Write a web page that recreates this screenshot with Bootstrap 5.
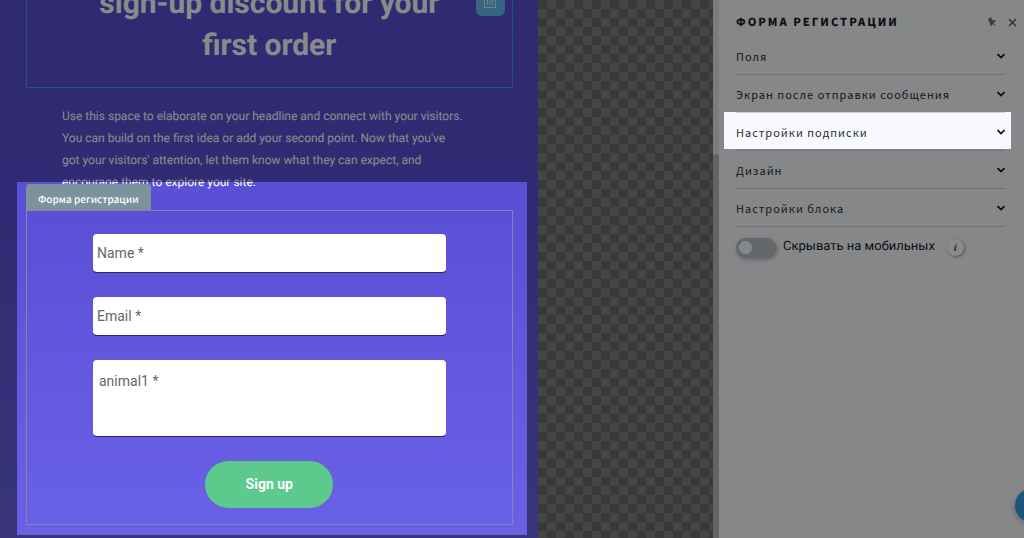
<!DOCTYPE html>
<html lang="ru">
<head>
<meta charset="utf-8">
<meta name="viewport" content="width=device-width, initial-scale=1">
<title>Форма регистрации</title>
<link href="https://cdn.jsdelivr.net/npm/bootstrap@5.3.0/dist/css/bootstrap.min.css" rel="stylesheet">
<style>
  :root { --shade: rgba(0, 0, 0, .46); --ui: "Noto Sans CJK SC", "Noto Sans", sans-serif; }
  body { font-family: Roboto, sans-serif; text-rendering: geometricPrecision; }
  .spotlight { box-shadow: 0 0 0 2000px var(--shade); }
  .page-pane { flex: 0 0 52.5%; padding: 0 11px 0 17px; background: linear-gradient(#5a4fd4 0, #5a50d6 40%, #6a62e6 100%); }
  .headline-block { margin: -40px 14px 0 9px; padding: 22px 60px 20px; border: 1px solid #43a0dc; }
  .headline-block h1 { font: 700 30px/42px Roboto, sans-serif; color: #fff; }
  .trash-btn { right: 7px; bottom: 71px; width: 29px; height: 29px; border-radius: 6px; background: #60bdea; }
  .intro { margin: 17px 30px 0 45px; font-size: 12px; line-height: 22px; color: #fff; }
  .form-spot { margin-top: -11px; padding: 2px 14px 10px 9px; }
  .block-tag { height: 26px; padding: 0 12px; font: 500 10px/29px var(--ui); color: #fff; background: #7c939d; border-radius: 3px 3px 0 0; }
  .form-frame { padding: 23px 66px 16px; gap: 24px; border: 1px solid #8683b4; }
  .field { padding: 0 4px; height: 39px; font-size: 14px; color: #666; border: 0; border-bottom: 1px solid #2b2660; border-radius: 4px; }
  .field::placeholder { color: #666; opacity: 1; }
  textarea.field { height: 77px; padding: 11px 6px; resize: none; }
  .submit-btn { width: 128px; height: 47px; font-size: 14px; font-weight: 700; color: #fff; background: #5dc98c; }
  .canvas-pane { background: repeating-conic-gradient(#454545 0 25%, #393939 0 50%) 0 0 / 18px 18px; }
  .scroll-track { width: 6px; padding-top: 154px; background: #7b7d7d; }
  .scroll-thumb { background: #626565; border-radius: 3px 3px 0 0; }
  .settings { flex: 0 0 305px; padding: 10px 19px 0 17px; background: #f7f9fe; color: #1c1e22; }
  .settings-head { height: 24px; margin-right: -12px; margin-bottom: 3px; }
  .settings-head h2 { font: 900 11px/24px var(--ui); letter-spacing: 2px; }
  .section-row { height: 38px; font: 400 11px/38px var(--ui); letter-spacing: 1px; color: #2a2d33; border-bottom: 1px solid #d0d4d8; }
  .section-row.current::after { content: ""; position: absolute; inset: -1px -6px 1px -12px; box-shadow: 0 0 0 2000px var(--shade); }
  .mobile-row { margin-top: 8px; height: 24px; font-size: 13px; }
  .mobile-row .form-check-input { width: 40px; height: 19px; border: 0; box-shadow: 1px 2px 4px #a5a9ad; background-color: #bac1c5; background-image: radial-gradient(circle 7px, #f7f9fc 6px, transparent 7px); background-size: 19px 19px; background-position: left center; }
  .mobile-row label { margin-left: 7px; }
  .info-btn { width: 17px; height: 17px; margin-left: 12px; font: italic 700 11px/17px "Liberation Serif", serif; color: #555; background: #fff; box-shadow: 1px 1px 3px #999; }
  .help-btn { right: -24px; bottom: 16px; width: 33px; height: 33px; background: #369be0; box-shadow: 0 2px 6px #bbb; }
</style>
</head>
<body class="vh-100 overflow-hidden">
<div class="d-flex h-100">
  <main class="page-pane position-relative overflow-hidden">
    <div class="headline-block position-relative">
      <h1 class="m-0 text-center">sign-up discount for your<br>first order</h1>
      <button class="trash-btn btn p-0 position-absolute d-flex justify-content-center align-items-center" type="button" aria-label="Удалить">
        <svg width="14" height="16" viewBox="0 0 14 16" fill="none" stroke="#d8effa" aria-hidden="true"><path d="M0 0.500h14M1.500 1v12.500h11V1M4.500 5v6M7 5v6M9.500 5v6"/></svg>
      </button>
    </div>
    <p class="intro">Use this space to elaborate on your headline and connect with your visitors.<br>You can build on the first idea or add your second point. Now that you've<br>got your visitors' attention, let them know what they can expect, and<br>encourage them to explore your site.</p>
    <section class="form-spot spotlight position-relative">
      <div class="block-tag d-inline-block align-top">Форма регистрации</div>
      <form class="form-frame d-flex flex-column">
        <input class="field form-control" type="text" placeholder="Name *" aria-label="Name *">
        <input class="field form-control" type="email" placeholder="Email *" aria-label="Email *">
        <textarea class="field form-control" placeholder="animal1 *" aria-label="animal1 *"></textarea>
        <button class="submit-btn btn rounded-pill align-self-center" type="button">Sign up</button>
      </form>
    </section>
  </main>
  <div class="canvas-pane flex-grow-1 d-flex justify-content-end">
    <div class="scroll-track d-flex"><div class="scroll-thumb flex-grow-1"></div></div>
  </div>
  <aside class="settings position-relative overflow-hidden">
    <div class="settings-head d-flex align-items-center">
      <h2 class="m-0 me-auto">ФОРМА РЕГИСТРАЦИИ</h2>
      <button class="btn p-0 border-0 d-flex me-2 pe-1" type="button" aria-label="Закрепить">
        <svg width="9" height="10" viewBox="0 0 9 10" fill="#6f767b" aria-hidden="true"><path d="M1 2.500 3.500 0l1 1v1l2 1.500L8.500 3 9 4 6.500 6.300 9 9.500 5.600 7.200 4 9 3 8.500l.2-2L1.800 4.500z"/></svg>
      </button>
      <button class="btn p-0 border-0 d-flex" type="button" aria-label="Закрыть">
        <svg width="9" height="9" viewBox="0 0 9 9" fill="none" stroke="#5c6167" stroke-width="1.600" aria-hidden="true"><path d="m1 1 7 7M8 1 1 8"/></svg>
      </button>
    </div>
    <button class="section-row btn rounded-0 border-top-0 border-start-0 border-end-0 p-0 w-100 d-flex align-items-center justify-content-between" type="button">Поля <svg width="8" height="6" viewBox="0 0 8 6" fill="none" stroke="#111" stroke-width="1.700"><path d="m.5 1 3.500 3.500L7.500 1"/></svg></button>
    <button class="section-row btn rounded-0 border-top-0 border-start-0 border-end-0 p-0 w-100 d-flex align-items-center justify-content-between" type="button">Экран после отправки сообщения <svg width="8" height="6" viewBox="0 0 8 6" fill="none" stroke="#111" stroke-width="1.700"><path d="m.5 1 3.500 3.500L7.500 1"/></svg></button>
    <button class="section-row current position-relative z-1 btn rounded-0 border-top-0 border-start-0 border-end-0 p-0 w-100 d-flex align-items-center justify-content-between" type="button">Настройки подписки <svg width="8" height="6" viewBox="0 0 8 6" fill="none" stroke="#111" stroke-width="1.700"><path d="m.5 1 3.500 3.500L7.500 1"/></svg></button>
    <button class="section-row btn rounded-0 border-top-0 border-start-0 border-end-0 p-0 w-100 d-flex align-items-center justify-content-between" type="button">Дизайн <svg width="8" height="6" viewBox="0 0 8 6" fill="none" stroke="#111" stroke-width="1.700"><path d="m.5 1 3.500 3.500L7.500 1"/></svg></button>
    <button class="section-row btn rounded-0 border-top-0 border-start-0 border-end-0 p-0 w-100 d-flex align-items-center justify-content-between" type="button">Настройки блока <svg width="8" height="6" viewBox="0 0 8 6" fill="none" stroke="#111" stroke-width="1.700"><path d="m.5 1 3.500 3.500L7.500 1"/></svg></button>
    <div class="mobile-row form-switch p-0 d-flex align-items-center">
      <input class="form-check-input m-0" type="checkbox" role="switch" id="hideMobile">
      <label for="hideMobile">Скрывать на мобильных</label>
      <button class="info-btn btn p-0 border-0 rounded-circle" type="button">i</button>
    </div>
    <button class="help-btn btn p-0 border-0 rounded-circle position-absolute" type="button" aria-label="Помощь"></button>
  </aside>
</div>
<script src="https://cdn.jsdelivr.net/npm/bootstrap@5.3.0/dist/js/bootstrap.bundle.min.js"></script>
</body>
</html>
